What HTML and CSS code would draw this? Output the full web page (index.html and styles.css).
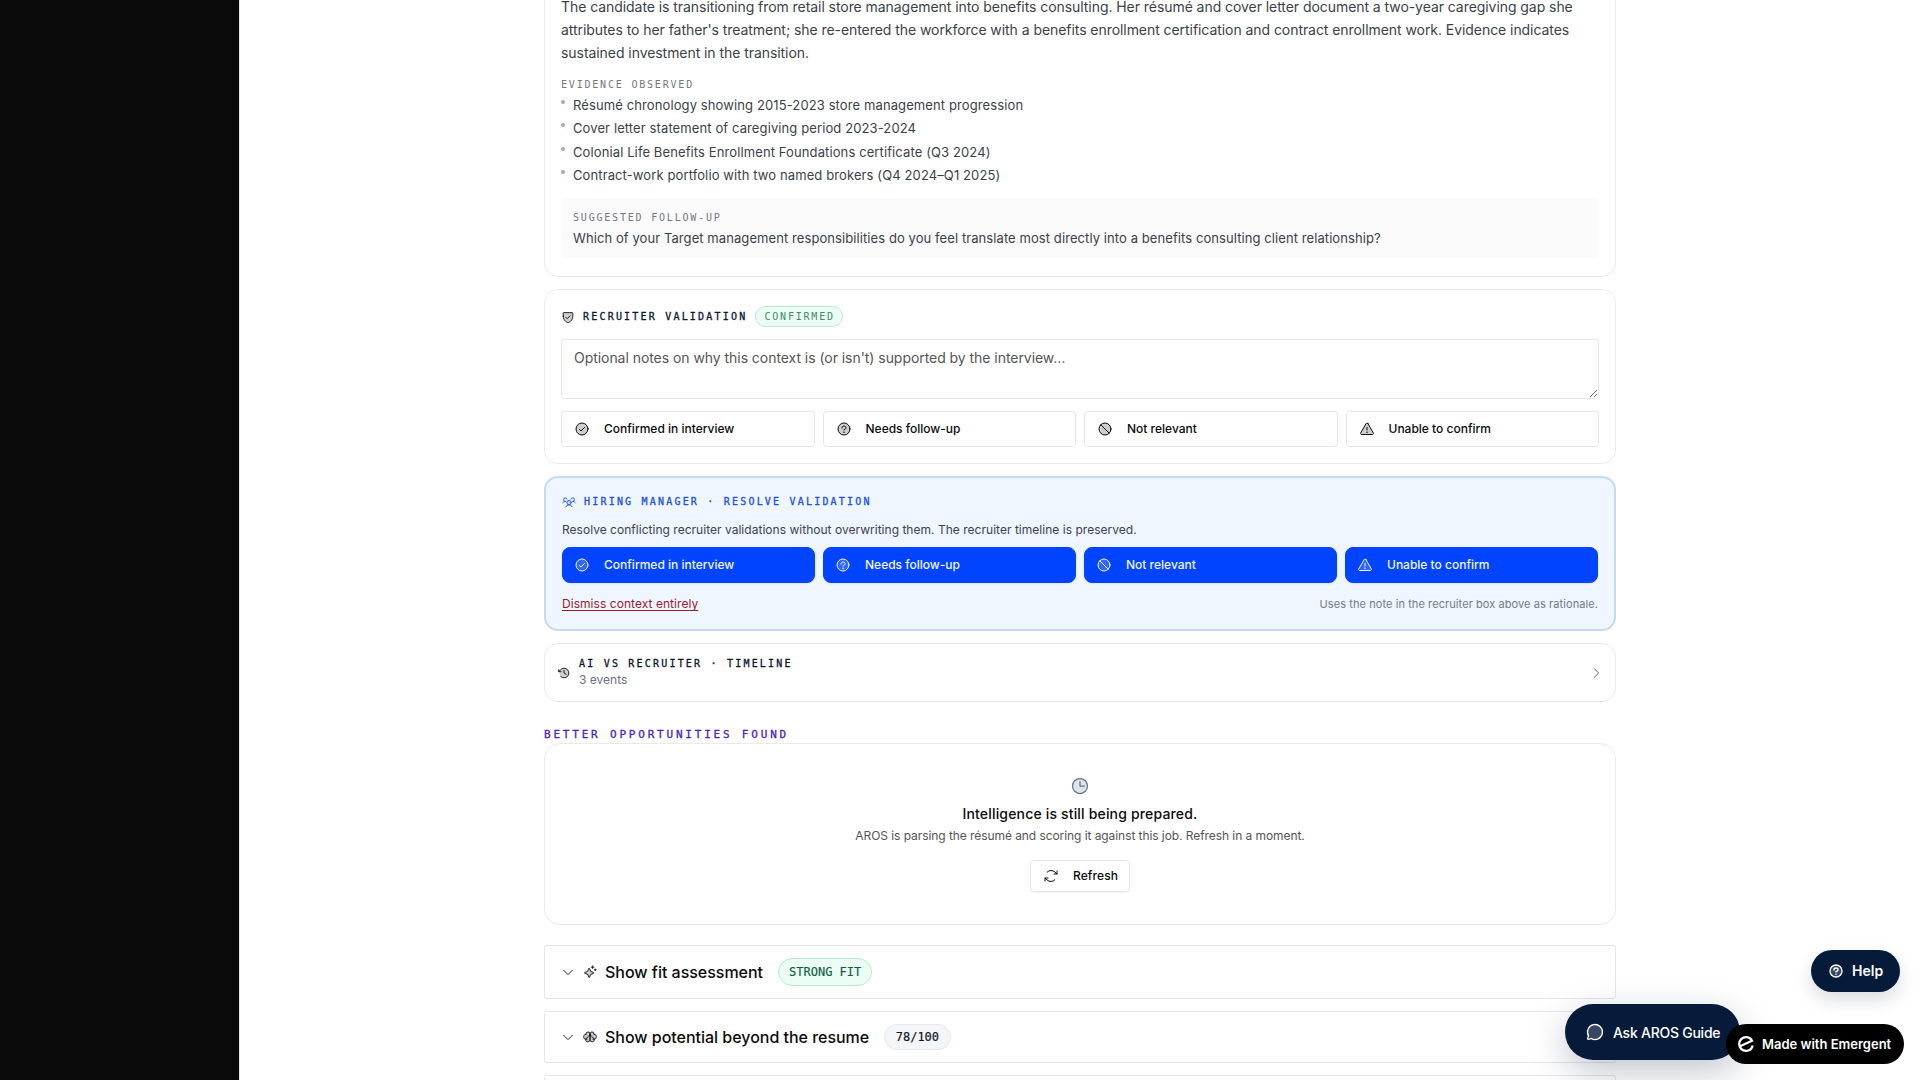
FILE: index.html
```html
<!DOCTYPE html>
<html lang="en">
<head>
<meta charset="utf-8">
<title>AROS</title>
<link rel="stylesheet" href="styles.css">
</head>
<body>
<svg class="sprite" xmlns="http://www.w3.org/2000/svg">
  <symbol id="check" viewBox="0 0 256 256"><circle class="tone" cx="128" cy="128" r="96"/><circle cx="128" cy="128" r="96"/><path d="M88 136l24 24 56-56"/></symbol>
  <symbol id="question" viewBox="0 0 256 256"><circle class="tone" cx="128" cy="128" r="96"/><circle cx="128" cy="128" r="96"/><path d="M128 144v-8c17.700 0 32-12.500 32-28s-14.300-28-32-28-32 12.500-32 28v4"/><circle class="dot" cx="128" cy="180" r="12"/></symbol>
  <symbol id="prohibit" viewBox="0 0 256 256"><circle class="tone" cx="128" cy="128" r="96"/><circle cx="128" cy="128" r="96"/><path d="M60 60l136 136"/></symbol>
  <symbol id="warning" viewBox="0 0 256 256"><path class="tone" d="M142 40l87 151c6 11-2 25-14 25H41c-12 0-20-14-14-25l87-151c6-11 22-11 28 0z"/><path d="M142 40l87 151c6 11-2 25-14 25H41c-12 0-20-14-14-25l87-151c6-11 22-11 28 0zM128 144v-40"/><circle class="dot" cx="128" cy="180" r="12"/></symbol>
  <symbol id="shield" viewBox="0 0 256 256"><path class="tone" d="M40 112V56a8 8 0 018-8h160a8 8 0 018 8v56c0 96-88 120-88 120S40 208 40 112z"/><path d="M40 112V56a8 8 0 018-8h160a8 8 0 018 8v56c0 96-88 120-88 120S40 208 40 112zM88 136l24 24 56-56"/></symbol>
  <symbol id="users" viewBox="0 0 256 256"><circle class="tone" cx="128" cy="140" r="40"/><circle cx="128" cy="140" r="40"/><path d="M196 116a60 60 0 0148 24M12 140a60 60 0 0148-24M70 216a64 64 0 01116 0M60 116a32 32 0 1131-40M165 76a32 32 0 1131 40"/></symbol>
  <symbol id="history" viewBox="0 0 256 256"><circle class="tone" cx="132" cy="128" r="88"/><path d="M128 80v48l40 24M72 104H32V64M67 192a88 88 0 101-127L32 104"/></symbol>
  <symbol id="clock" viewBox="0 0 256 256"><circle class="tone" cx="128" cy="128" r="96"/><circle cx="128" cy="128" r="96"/><path d="M128 72v56h56"/></symbol>
  <symbol id="refresh" viewBox="0 0 256 256"><path d="M176 96h48V48M80 160H32v48M190 190a88 88 0 01-124 2l-34-32M66 66a88 88 0 01124-2l34 32"/></symbol>
  <symbol id="down" viewBox="0 0 256 256"><path d="M208 96l-80 80-80-80"/></symbol>
  <symbol id="right" viewBox="0 0 256 256"><path d="M96 48l80 80-80 80"/></symbol>
  <symbol id="sparkle" viewBox="0 0 256 256"><path class="tone" d="M84 172l-53-20c-7-3-7-13 0-16l53-20 20-53c3-7 13-7 16 0l20 53 53 20c7 3 7 13 0 16l-53 20-20 53c-3 7-13 7-16 0z"/><path d="M84 172l-53-20c-7-3-7-13 0-16l53-20 20-53c3-7 13-7 16 0l20 53 53 20c7 3 7 13 0 16l-53 20-20 53c-3 7-13 7-16 0zM176 16v48M224 72v32M200 40h-48M240 88h-32"/></symbol>
  <symbol id="brain" viewBox="0 0 256 256"><path class="tone" d="M88 32a36 36 0 00-36 42 48 48 0 000 92 40 40 0 0076 16 40 40 0 0076-16 48 48 0 000-92 36 36 0 00-76-10 36 36 0 00-40-32z"/><path d="M88 136a40 40 0 1040 40V72a36 36 0 10-72 0v2M168 136a40 40 0 11-40 40V72a36 36 0 1172 0v2M72 172h-8a48 48 0 01-8-98M184 172h8a48 48 0 008-98M164 112h-4a28 28 0 01-28-28M92 112h4a28 28 0 0028-28"/></symbol>
  <symbol id="chat" viewBox="0 0 256 256"><path class="tone" d="M45 177a96 96 0 1134 34l-39 13a8 8 0 01-10-10z"/><path d="M45 177a96 96 0 1134 34l-34 11a10 10 0 01-12-12z"/></symbol>
</svg>
<div class="app">
  <aside class="sidebar"></aside>
  <main class="main">
    <div class="column">
      <section class="card context">
        <p class="summary">The candidate is transitioning from retail store management into benefits consulting. Her résumé and cover letter document a two-year caregiving gap she attributes to her father's treatment; she re-entered the workforce with a benefits enrollment certification and contract enrollment work. Evidence indicates sustained investment in the transition.</p>
        <h4 class="eyebrow muted">EVIDENCE OBSERVED</h4>
        <ul class="evidence">
          <li>Résumé chronology showing 2015-2023 store management progression</li>
          <li>Cover letter statement of caregiving period 2023-2024</li>
          <li>Colonial Life Benefits Enrollment Foundations certificate (Q3 2024)</li>
          <li>Contract-work portfolio with two named brokers (Q4 2024–Q1 2025)</li>
        </ul>
        <div class="followup">
          <h4 class="eyebrow muted">SUGGESTED FOLLOW-UP</h4>
          <p>Which of your Target management responsibilities do you feel translate most directly into a benefits consulting client relationship?</p>
        </div>
      </section>

      <section class="card recruiter">
        <header class="head"><svg class="icon i14"><use href="#shield"/></svg><h3 class="eyebrow strong">RECRUITER VALIDATION</h3><span class="tag">CONFIRMED</span></header>
        <textarea class="notes" placeholder="Optional notes on why this context is (or isn't) supported by the interview…"></textarea>
        <div class="actions">
          <button class="btn"><svg class="icon i16"><use href="#check"/></svg>Confirmed in interview</button>
          <button class="btn"><svg class="icon i16"><use href="#question"/></svg>Needs follow-up</button>
          <button class="btn"><svg class="icon i16"><use href="#prohibit"/></svg>Not relevant</button>
          <button class="btn"><svg class="icon i16"><use href="#warning"/></svg>Unable to confirm</button>
        </div>
      </section>

      <section class="card manager">
        <header class="head"><svg class="icon i14"><use href="#users"/></svg><h3 class="eyebrow">HIRING MANAGER · RESOLVE VALIDATION</h3></header>
        <p class="manager-text">Resolve conflicting recruiter validations without overwriting them. The recruiter timeline is preserved.</p>
        <div class="actions">
          <button class="btn primary"><svg class="icon i16"><use href="#check"/></svg>Confirmed in interview</button>
          <button class="btn primary"><svg class="icon i16"><use href="#question"/></svg>Needs follow-up</button>
          <button class="btn primary"><svg class="icon i16"><use href="#prohibit"/></svg>Not relevant</button>
          <button class="btn primary"><svg class="icon i16"><use href="#warning"/></svg>Unable to confirm</button>
        </div>
        <footer class="manager-foot"><a class="dismiss">Dismiss context entirely</a><span class="hint">Uses the note in the recruiter box above as rationale.</span></footer>
      </section>

      <section class="card timeline">
        <svg class="icon i14"><use href="#history"/></svg>
        <div class="timeline-text"><h3 class="eyebrow strong">AI VS RECRUITER · TIMELINE</h3><p>3 events</p></div>
        <svg class="icon i14 faded"><use href="#right"/></svg>
      </section>

      <h2 class="section-label">BETTER OPPORTUNITIES FOUND</h2>
      <section class="card pending">
        <svg class="icon i20 slate"><use href="#clock"/></svg>
        <h3>Intelligence is still being prepared.</h3>
        <p>AROS is parsing the résumé and scoring it against this job. Refresh in a moment.</p>
        <button class="btn refresh"><svg class="icon i16"><use href="#refresh"/></svg>Refresh</button>
      </section>

      <div class="folds">
        <section class="fold tall"><svg class="icon i14"><use href="#down"/></svg><svg class="icon i14"><use href="#sparkle"/></svg><h3>Show fit assessment</h3><span class="pill green">STRONG FIT</span></section>
        <section class="fold"><svg class="icon i14"><use href="#down"/></svg><svg class="icon i14"><use href="#brain"/></svg><h3>Show potential beyond the resume</h3><span class="pill">78/100</span></section>
        <section class="fold"></section>
      </div>
    </div>
  </main>
</div>
<button class="float help"><svg class="icon i16 bold"><use href="#question"/></svg>Help</button>
<button class="float guide"><svg class="icon i20"><use href="#chat"/></svg>Ask AROS Guide</button>
<a class="float made"><svg class="logo" viewBox="0 0 16 16"><path d="M2 10.300L14 4.800C12.800 2.500 10.600 1.200 8 1.200 4.200 1.200 1.200 4.200 1.200 8c0 3.800 3 6.800 6.800 6.800 3.300 0 6-2.200 6.700-5.300"/></svg>Made with Emergent</a>
</body>
</html>
```
FILE: styles.css
```css
* { box-sizing: border-box; margin: 0; padding: 0; }
body { height: 1080px; overflow: hidden; background: #fff; color: #0a0a0a; font-family: Inter, "Liberation Sans", sans-serif; font-size: 14px; }
h2, h3, h4 { font-weight: 500; }
button { font-family: inherit; border: 0; }
.sprite { position: absolute; width: 0; height: 0; }
.icon { flex: none; fill: none; stroke: currentColor; stroke-width: 16; stroke-linecap: round; stroke-linejoin: round; }
.tone { fill: currentColor; stroke: none; opacity: .2; }
.dot { fill: currentColor; stroke: none; }
.i14 { width: 14px; height: 14px; }
.i16 { width: 16px; height: 16px; }
.i20 { width: 20px; height: 20px; }

.app { display: flex; height: 1080px; overflow: hidden; }
.sidebar { width: 240px; flex: none; background: #0a0a0a; border-right: 1px solid #e5e7eb; }
.main { flex: 1; display: flex; justify-content: center; }
.column { width: 1072px; margin-top: -22px; }

.card { border: 1px solid #e9eaec; border-radius: 14px; background: #fff; padding: 16px; margin-bottom: 12px; }
.eyebrow { font-family: "DejaVu Sans Mono", "Liberation Mono", monospace; font-size: 10px; line-height: 15px; letter-spacing: 2.2px; -webkit-text-stroke: .3px currentColor; }
.muted { color: #737780; font-weight: 400; letter-spacing: 1.8px; -webkit-text-stroke: 0; }
.strong { color: #0b1730; }

.context { height: 299px; }
.summary { font-size: 14px; line-height: 23px; letter-spacing: -.06px; color: #3b3f48; margin-bottom: 13px; }
.evidence { list-style: none; display: grid; gap: 4px; margin: 4px 0 12px; font-size: 13px; line-height: 19.4px; letter-spacing: .11px; color: #3b3f48; }
.evidence li { display: flex; gap: 8px; }
.evidence li::before { content: ""; width: 4px; height: 4px; margin-top: 4px; border-radius: 2px; background: #a5a8ae; }
.followup { background: #fafafb; border-radius: 4px; padding: 12px; height: 60px; font-size: 13px; line-height: 20px; letter-spacing: .082px; color: #3b3f48; }
.followup p { margin-top: 3px; }

.recruiter { height: 175px; }
.head { display: flex; align-items: center; gap: 8px; }
.recruiter .head { height: 21px; }
.tag { font-family: "DejaVu Sans Mono", monospace; font-size: 10px; letter-spacing: 1.8px; line-height: 19px; padding: 0 7px 0 8px; border: 1px solid #b8ead2; border-radius: 11px; background: #ecfdf5; color: #3f8a68; }
.notes { display: block; width: 100%; height: 60px; margin: 12px 0; padding: 8px 12px; border: 1px solid #e5e7eb; border-radius: 4px; font: 14px/20px Inter, sans-serif; letter-spacing: -.05px; resize: vertical; }
.notes::placeholder { color: #555; }
.actions { display: grid; grid-template-columns: repeat(4, 1fr); gap: 8px; }
.btn { display: flex; align-items: center; gap: 14px; height: 36px; padding: 0 12px 1px; border: 1px solid #e5e7eb; border-radius: 4px; background: #fff; color: #0a0a0a; font-size: 12px; font-weight: 500; }
.primary { padding-left: 11px; background: #0044ff; border-color: #0044ff; color: #f3f6ff; border-radius: 8px; box-shadow: 0 1px 2px rgba(0, 0, 0, .08); }

.manager { height: 155px; border: 2px solid #c6d9ef; background: #eff6ff; }
.manager .head { height: 15px; color: #1d4fe0; }
.manager-text { font-size: 12px; line-height: 18px; letter-spacing: .025px; color: #3b4250; margin: 12px 0 8px; }
.manager-foot { display: flex; justify-content: space-between; align-items: center; margin-top: 12px; line-height: 18px; }
.dismiss { font-size: 12px; letter-spacing: .05px; color: #9b1c2c; text-decoration: underline; text-underline-offset: 2px; }
.hint { font-size: 11px; letter-spacing: .08px; color: #737b88; }

.timeline { display: flex; align-items: center; gap: 8px; height: 59px; padding: 0 12px; margin-bottom: 25px; }
.timeline-text { flex: 1; padding-bottom: 2px; font-size: 12px; line-height: 17px; color: #6b7280; }
.faded { color: #4b5563; }

.section-label { font-family: "DejaVu Sans Mono", monospace; font-size: 11px; line-height: 16px; letter-spacing: 2.8px; color: #4c1fb8; -webkit-text-stroke: .3px currentColor; }
.pending { display: flex; flex-direction: column; align-items: center; height: 182px; padding: 32px 16px; margin-bottom: 20px; border-radius: 16px; }
.slate { color: #64748b; }
.pending h3 { font-size: 14px; line-height: 20px; letter-spacing: .17px; margin-top: 8px; }
.pending p { font-size: 12px; line-height: 18px; letter-spacing: -.07px; margin: 3px 0 15px; color: #555; }
.refresh { height: 32px; padding-right: 11px; box-shadow: 0 1px 2px rgba(0, 0, 0, .05); letter-spacing: .1px; }

.folds { display: grid; gap: 12px; }
.fold { display: flex; align-items: center; gap: 8px; height: 52px; padding: 0 16px; border: 1px solid #e5e7eb; border-radius: 3px; }
.tall { height: 54px; }
.fold h3 { font-size: 16px; line-height: 24px; letter-spacing: -.02px; }
.pill { margin-left: 7px; padding: 0 10.5px; height: 26px; line-height: 24px; border: 1px solid #e5e9ef; border-radius: 14px; background: #f3f5f8; font-family: "DejaVu Sans Mono", monospace; font-size: 12px; color: #0b1220; -webkit-text-stroke: .15px currentColor; }
.green { height: 28px; line-height: 26px; background: #ecfdf5; border-color: #b8ead2; color: #0b5f41; padding: 0 10px; }

.float { position: absolute; display: flex; align-items: center; color: #fff; font-weight: 600; }
.help { left: 1811px; top: 950px; width: 89px; height: 42px; padding: 0 0 1px 17px; gap: 8px; border-radius: 21px; background: #061a3a; font-size: 14px; box-shadow: 0 8px 18px rgba(6, 26, 58, .15); }
.help .tone { opacity: 0; }
.bold { stroke-width: 22; }
.guide { left: 1565px; top: 1004px; width: 175px; height: 56px; padding-left: 20px; gap: 8px; border-radius: 28px; background: #061a3a; font-size: 14px; font-weight: 500; letter-spacing: -.25px; box-shadow: 0 12px 36px rgba(6, 26, 58, .25); }
.made { left: 1726px; top: 1024px; width: 178px; height: 40px; padding-left: 12px; gap: 8px; border-radius: 20px; background: #000; font-size: 13px; }
.logo { width: 16px; height: 16px; fill: none; stroke: #fff; stroke-width: 2.3; }
```
